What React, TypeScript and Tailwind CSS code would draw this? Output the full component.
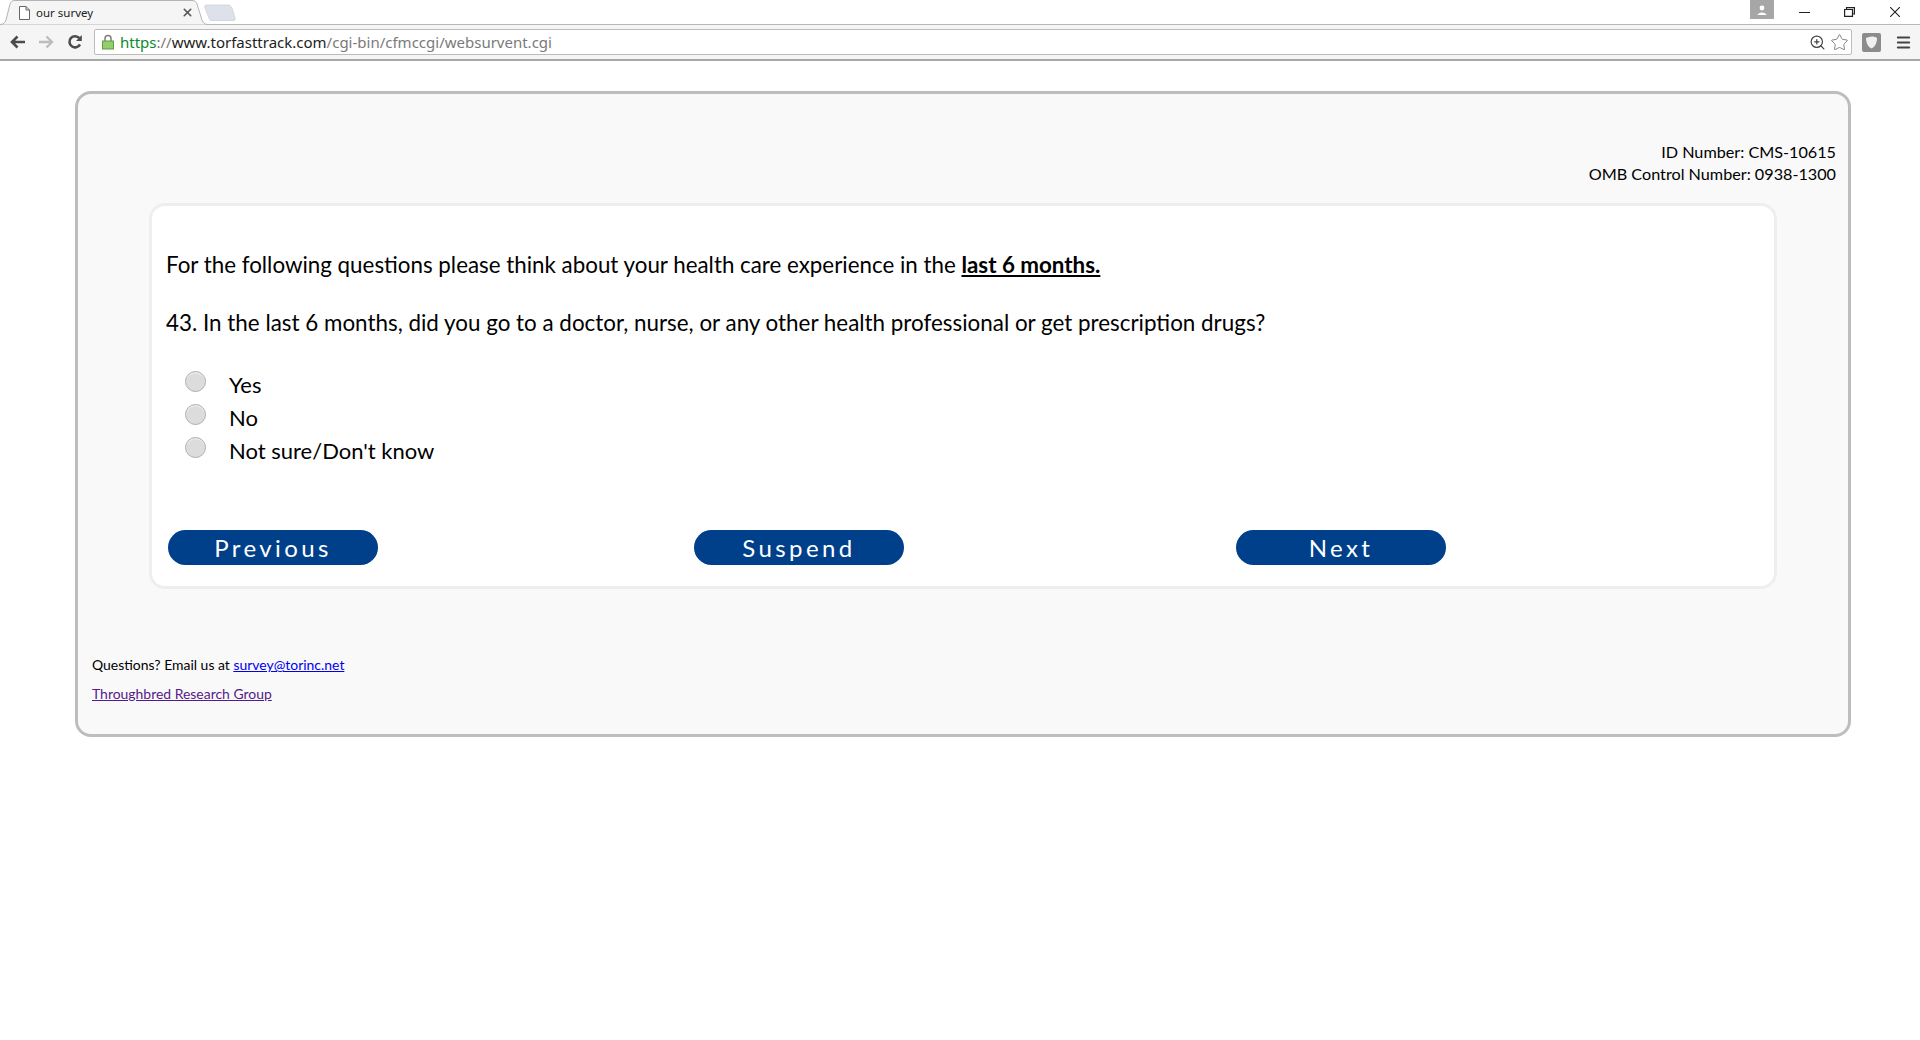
import { Star, ZoomIn, X, Menu } from 'lucide-react';

function Radio({ label }: { label: string }) {
  return (
    <div className="flex h-[33px] items-start">
      <span className="h-[21px] w-[21px] shrink-0 rounded-full border border-[#aeaeae] bg-[#dcdcdc] shadow-[inset_0_1px_1px_#f4f4f4]" />
      <span className="ml-[23px] text-[22px] leading-[27px] text-black">{label}</span>
    </div>
  );
}

function NavButton({ label }: { label: string }) {
  return (
    <button className="flex h-[35px] w-[210px] items-center justify-center rounded-[18px] bg-[#003f8a] text-[24px] leading-none tracking-[3.4px] text-white">
      {label}
    </button>
  );
}

function BrowserChrome() {
  return (
    <div className="relative h-[61px] border-b-2 border-[#a8a8a8] bg-[#f5f5f5]">
      <div className="relative h-[25px] border-b border-[#b8b8b8] bg-white">
        <svg className="absolute left-0 top-0" width="240" height="25" viewBox="0 0 240 25">
          <path d="M0 24.5 C3 24.5 5 23 6 20 L10 4 C11 1.5 12 .5 15 .5 L192 .5 C195 .5 196 1.5 197 4 L202 20 C203 23 205 24.5 208 24.5" fill="#f5f5f5" stroke="#b4b4b4" />
          <path d="M205 8 C204 5.5 205 5 207 5 L227 5 C230 5 231 6 232 8 L235 18 C235.5 20 235 20.500 233 20.500 L212 20.500 C210 20.500 209.500 20 209 18 Z" fill="#dde2ea" stroke="#c8ccd2" strokeWidth="0.7" />
        </svg>
        <svg className="absolute left-[19px] top-[6px]" width="11" height="14" viewBox="0 0 11 14" fill="white" stroke="#666">
          <path d="M.5 .5 H7 L10.500 4 V13.500 H.5 Z M7 .5 V4 H10.500" />
        </svg>
        <span className="absolute left-[36px] top-[5px] font-['Noto_Sans'] text-[11.5px] leading-[16px] text-[#222]">our survey</span>
        <X className="absolute left-[181px] top-[6px] text-[#555]" size={13} strokeWidth={3} />
        <div className="absolute left-[1750px] top-0 flex h-[19px] w-[24px] items-center justify-center bg-[#a6a6a6]">
          <svg width="10" height="10" viewBox="0 0 10 10" fill="white">
            <circle cx="5" cy="3" r="2.4" />
            <path d="M0.5 10 C1 6.500 9 6.500 9.500 10 Z" />
          </svg>
        </div>
        <div className="absolute left-[1799px] top-[12px] h-[1px] w-[11px] bg-[#222]" />
        <svg className="absolute left-[1844px] top-[7px]" width="11" height="10" viewBox="0 0 11 10" fill="none" stroke="#222" strokeWidth="1.2">
          <path d="M2.500 2.500 V.6 H10.400 V7 H8.500 M.6 2.500 H8.500 V9.400 H.6 Z" />
        </svg>
        <svg className="absolute left-[1890px] top-[7px]" width="10" height="10" viewBox="0 0 10 10" fill="none" stroke="#222" strokeWidth="1.1">
          <path d="M0 0 L10 10 M10 0 L0 10" />
        </svg>
      </div>
      <div className="flex h-[34px] items-center pl-[9px] pr-[8px]">
        <svg width="17" height="16" viewBox="0 0 17 16" fill="none" stroke="#4c4c4c" strokeWidth="2.6">
          <path d="M16 8 H3 M8.500 2.500 L3 8 L8.500 13.500" />
        </svg>
        <svg className="ml-[12px]" width="17" height="16" viewBox="0 0 17 16" fill="none" stroke="#bdbdbd" strokeWidth="2.4">
          <path d="M1 8 H14 M8.500 2.500 L14 8 L8.500 13.500" />
        </svg>
        <svg className="ml-[12px]" width="16" height="16" viewBox="0 0 16 16" fill="none" stroke="#4c4c4c" strokeWidth="2.6">
          <path d="M13 10.500 A5.600 5.600 0 1 1 12.400 4.200" />
          <path d="M14.800 1 V7 H9 Z" fill="#4c4c4c" stroke="none" />
        </svg>
        <div className="ml-[11px] flex h-[26px] w-[1758px] items-center rounded-[2px] border border-[#bcbcbc] bg-white pl-[7px]">
          <svg width="12" height="16" viewBox="0 0 12 16">
            <path d="M3 7 V4.500 A3 3 0 0 1 9 4.500 V7" fill="none" stroke="#7d7d7d" strokeWidth="1.5" />
            <rect x=".5" y="7" width="11" height="8" fill="#92cf6c" stroke="#5f9c3f" />
          </svg>
          <span className="ml-[6px] font-['Noto_Sans'] text-[15px] leading-[20px] text-[#7a7a7a]">
            <span className="text-[#0b8a2b]">https</span>://<span className="text-[#222]">www.torfasttrack.com</span>/cgi-bin/cfmccgi/websurvent.cgi
          </span>
          <ZoomIn className="ml-auto text-[#444]" size={17} strokeWidth={1.7} />
          <Star className="ml-[4px] mr-[2px] text-[#666]" size={19} strokeWidth={1} />
        </div>
        <div className="ml-[10px] flex h-[19px] w-[19px] items-center justify-center rounded-[2px] bg-[#8c8c8c]">
          <svg width="13" height="13" viewBox="0 0 13 13" fill="#f0f0f0">
            <path d="M1 2 C5 0 9 0 12 2 C12 7 10 11 6.500 12.500 C3 11 1 7 1 2 Z" />
          </svg>
        </div>
        <Menu className="ml-[14px] text-[#444]" size={17} strokeWidth={2.8} />
      </div>
    </div>
  );
}

export default function App() {
  return (
    <div className="min-h-[1040px] bg-white font-['Lato','Open_Sans',sans-serif] text-black">
      <BrowserChrome />
      <div className="px-[75px] pt-[30px]">
        <div className="h-[646px] w-[1776px] rounded-[16px] border-[3px] border-[#bdbdbd] bg-[#f9f9f9] pl-[14px] pr-[12px]">
          <div className="pt-[47px] text-right text-[16.2px] leading-[22px]">
            <p>ID Number: CMS-10615</p>
            <p>OMB Control Number: 0938-1300</p>
          </div>
          <div className="ml-[57px] mt-[18px] h-[386px] w-[1628px] rounded-[16px] border-[3px] border-[#eeeeee] bg-white pl-[14px]">
            <p className="pt-[45px] text-[22.35px] leading-[27px]">
              For the following questions please think about your health care experience in the{' '}
              <span className="font-bold underline">last 6 months.</span>
            </p>
            <p className="mt-[31px] text-[22.4px] leading-[27px]">
              43. In the last 6 months, did you go to a doctor, nurse, or any other health professional or get prescription drugs?
            </p>
            <div className="ml-[19px] mt-[35px]">
              <Radio label="Yes" />
              <Radio label="No" />
              <Radio label="Not sure/Don't know" />
            </div>
            <div className="ml-[2px] mt-[60px] flex">
              <NavButton label="Previous" />
              <div className="ml-[316px]">
                <NavButton label="Suspend" />
              </div>
              <div className="ml-[332px]">
                <NavButton label="Next" />
              </div>
            </div>
          </div>
          <div className="pt-[67px] text-[13.95px] leading-[18px]">
            <p>
              Questions? Email us at <a className="text-[#0000ee] underline">survey@torinc.net</a>
            </p>
            <p className="mt-[11px]">
              <a className="text-[#551a8b] underline">Throughbred Research Group</a>
            </p>
          </div>
        </div>
      </div>
    </div>
  );
}
